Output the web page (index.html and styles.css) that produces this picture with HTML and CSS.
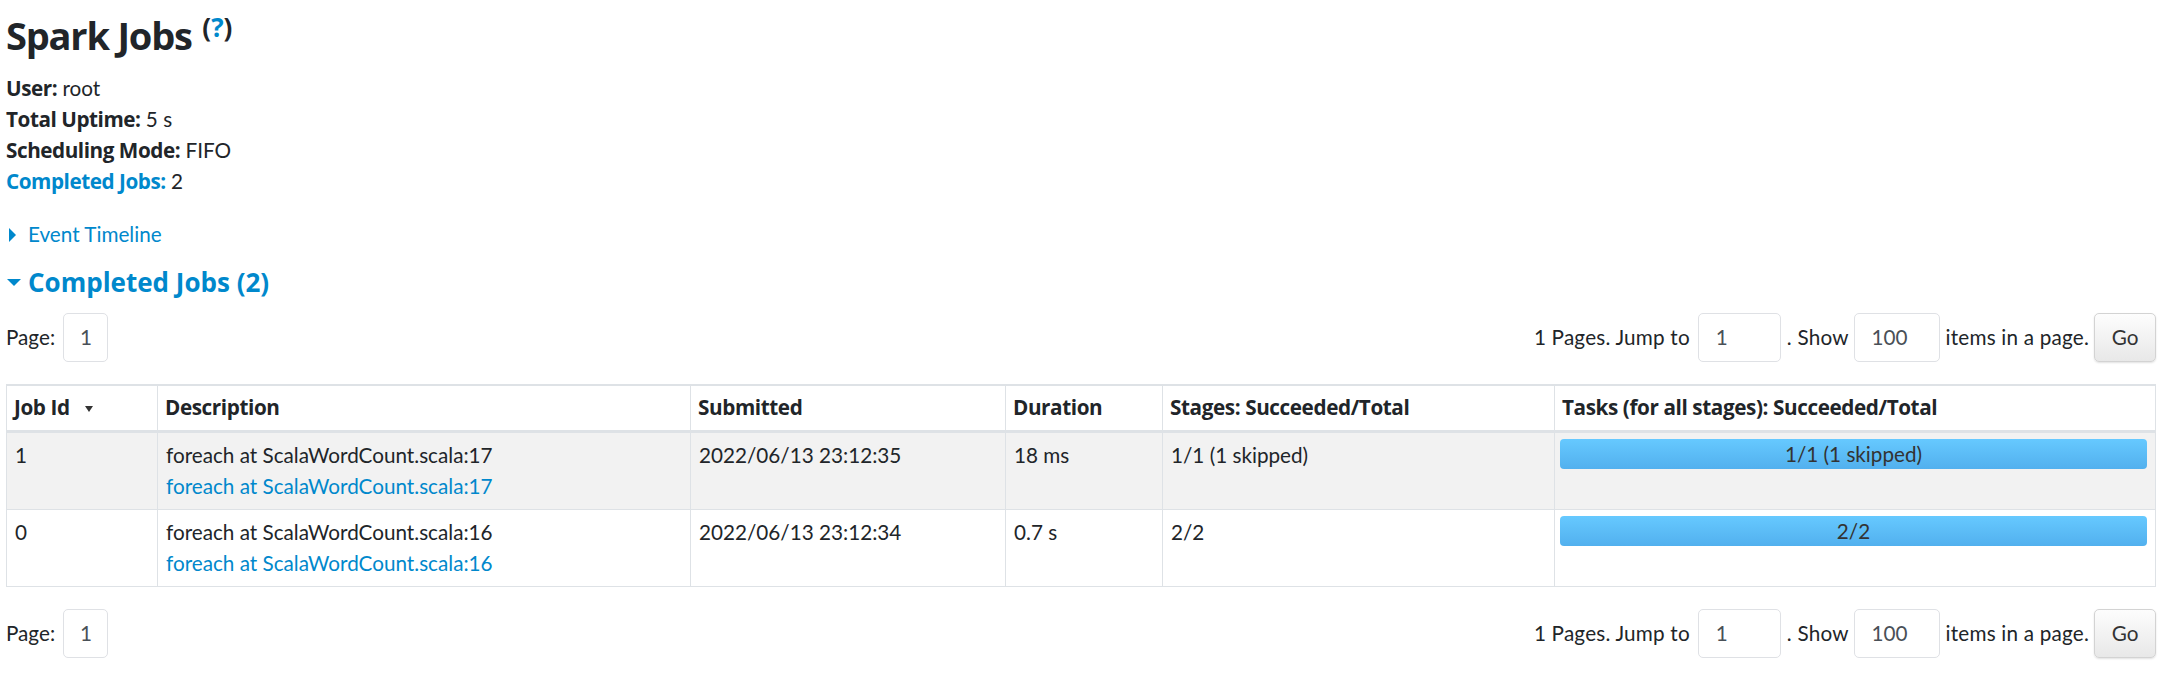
FILE: index.html
```
<!DOCTYPE html>
<html lang="en">
<head>
<meta charset="utf-8">
<title>Spark Jobs</title>
<link rel="stylesheet" href="styles.css">
</head>
<body>
<div class="page">
  <h3 class="title">Spark Jobs <sup class="help">(<a href="#">?</a>)</sup></h3>

  <ul class="summary">
    <li><strong>User:</strong> root</li>
    <li><strong>Total Uptime:</strong> 5 s</li>
    <li><strong>Scheduling Mode:</strong> FIFO</li>
    <li><a href="#"><strong>Completed Jobs:</strong></a> 2</li>
  </ul>

  <div class="timeline"><span class="arrow-closed"></span><a href="#">Event Timeline</a></div>

  <h4 class="section"><span class="arrow-open"></span><a href="#">Completed Jobs (2)</a></h4>

  <div class="pager">
    <div class="pager-left"><span>Page:</span><span class="box box-page">1</span></div>
    <div class="pager-right"><span class="ptext">1 Pages. Jump to</span><span class="box box-jump">1</span><span class="ptext">. Show</span><span class="box box-show">100</span><span class="ptext">items in a page.</span><button class="go">Go</button></div>
  </div>

  <table class="jobs">
    <colgroup>
      <col class="c-id"><col class="c-desc"><col class="c-sub"><col class="c-dur"><col class="c-stages"><col class="c-tasks">
    </colgroup>
    <thead>
      <tr>
        <th>Job Id<svg class="sort" width="8" height="6" viewBox="0 0 8 6"><polygon points="0,0 8,0 4,6" fill="#333"/></svg></th>
        <th>Description</th>
        <th>Submitted</th>
        <th>Duration</th>
        <th>Stages: Succeeded/Total</th>
        <th>Tasks (for all stages): Succeeded/Total</th>
      </tr>
    </thead>
    <tbody>
      <tr class="odd">
        <td>1</td>
        <td><div>foreach at ScalaWordCount.scala:17</div><a href="#">foreach at ScalaWordCount.scala:17</a></td>
        <td>2022/06/13 23:12:35</td>
        <td>18 ms</td>
        <td>1/1 (1 skipped)</td>
        <td><div class="bar">1/1 (1 skipped)</div></td>
      </tr>
      <tr>
        <td>0</td>
        <td><div>foreach at ScalaWordCount.scala:16</div><a href="#">foreach at ScalaWordCount.scala:16</a></td>
        <td>2022/06/13 23:12:34</td>
        <td>0.7 s</td>
        <td>2/2</td>
        <td><div class="bar">2/2</div></td>
      </tr>
    </tbody>
  </table>

  <div class="pager pager-bottom">
    <div class="pager-left"><span>Page:</span><span class="box box-page">1</span></div>
    <div class="pager-right"><span class="ptext">1 Pages. Jump to</span><span class="box box-jump">1</span><span class="ptext">. Show</span><span class="box box-show">100</span><span class="ptext">items in a page.</span><button class="go">Go</button></div>
  </div>
</div>
</body>
</html>
```
FILE: styles.css
```
html, body {
  margin: 0;
  padding: 0;
  background: #fff;
}
body {
  font-family: Lato, "Noto Sans", sans-serif;
  font-size: 20.7px;
  line-height: 31px;
  color: #212529;
}
a {
  color: #0088cc;
  text-decoration: none;
}
strong, th, .title, .section {
  font-family: "Open Sans", Lato, sans-serif;
}
.page {
  padding: 12px 8px 20px 6px;
}
.title {
  margin: 0;
  font-size: 38px;
  line-height: 46px;
  font-weight: 700;
  letter-spacing: -1.2px;
}
.help {
  font-size: 26px;
  line-height: 0;
  vertical-align: 13px;
  font-weight: 700;
  letter-spacing: 0;
  margin-left: 2px;
}
.summary {
  list-style: none;
  margin: 15px 0 0;
  padding: 0;
}
.summary strong {
  font-weight: 700;
  letter-spacing: -0.45px;
}
.timeline {
  margin-top: 22px;
  display: flex;
  align-items: center;
}
.arrow-closed {
  display: inline-block;
  width: 0;
  height: 0;
  border-top: 7px solid transparent;
  border-bottom: 7px solid transparent;
  border-left: 7px solid #0088cc;
  margin: 0 12px 0 3px;
}
.section {
  margin: 17px 0 0;
  font-size: 26px;
  line-height: 30px;
  font-weight: 700;
  display: flex;
  align-items: center;
}
.arrow-open {
  display: inline-block;
  width: 0;
  height: 0;
  border-left: 7px solid transparent;
  border-right: 7px solid transparent;
  border-top: 7px solid #0088cc;
  margin: 0 7px 0 1px;
}
.pager {
  margin-top: 16px;
  display: flex;
  justify-content: space-between;
  align-items: center;
  height: 49px;
}
.pager-left, .pager-right {
  display: flex;
  align-items: center;
}
.ptext {
  letter-spacing: 0.2px;
}
.box {
  box-sizing: border-box;
  height: 49px;
  border: 1px solid #dfe1e5;
  border-radius: 5px;
  color: #495057;
  display: inline-flex;
  align-items: center;
  padding-left: 17px;
}
.box-page { width: 45px; padding-left: 16px; margin-left: 8px; }
.box-jump { width: 83px; margin: 0 6px 0 8px; }
.box-show { width: 86px; margin: 0 6px 0 5px; }
.go {
  box-sizing: border-box;
  width: 62px;
  height: 49px;
  margin-left: 5px;
  font: inherit;
  color: #333;
  border: 1px solid #d3d3d3;
  border-radius: 5px;
  background: linear-gradient(to bottom, #fdfdfd 0%, #e8e8e8 100%);
  box-shadow: 0 1px 2px rgba(0,0,0,0.12);
  padding: 0;
}
.jobs {
  margin-top: 22px;
  width: 100%;
  border-collapse: collapse;
  table-layout: fixed;
  border: 1px solid #dee2e6;
}
.c-id { width: 151px; }
.c-desc { width: 533px; }
.c-sub { width: 315px; }
.c-dur { width: 157px; }
.c-stages { width: 392px; }
.c-tasks { width: 601px; }
.jobs th, .jobs td {
  border: 1px solid #dee2e6;
  text-align: left;
  vertical-align: top;
}
.jobs th {
  border-top: 2px solid #dee2e6;
  border-bottom: 3px solid #dee2e6;
  padding: 6px 7px 7px;
  font-weight: 700;
  letter-spacing: -0.4px;
  white-space: nowrap;
}
.jobs td {
  padding: 7px 7px 7px 8px;
}
.sort {
  margin-left: 15px;
  vertical-align: 3px;
}
.odd td {
  background: #f2f2f2;
}
.jobs td:last-child {
  padding: 6px 8px 7px 5px;
}
.bar {
  height: 30px;
  line-height: 30px;
  border-radius: 4px;
  text-align: center;
  color: #333;
  background: linear-gradient(to bottom, #66c9ff 0%, #52b0ee 100%);
  margin-bottom: 32px;
}
.pager-bottom {
  margin-top: 22px;
}
```
